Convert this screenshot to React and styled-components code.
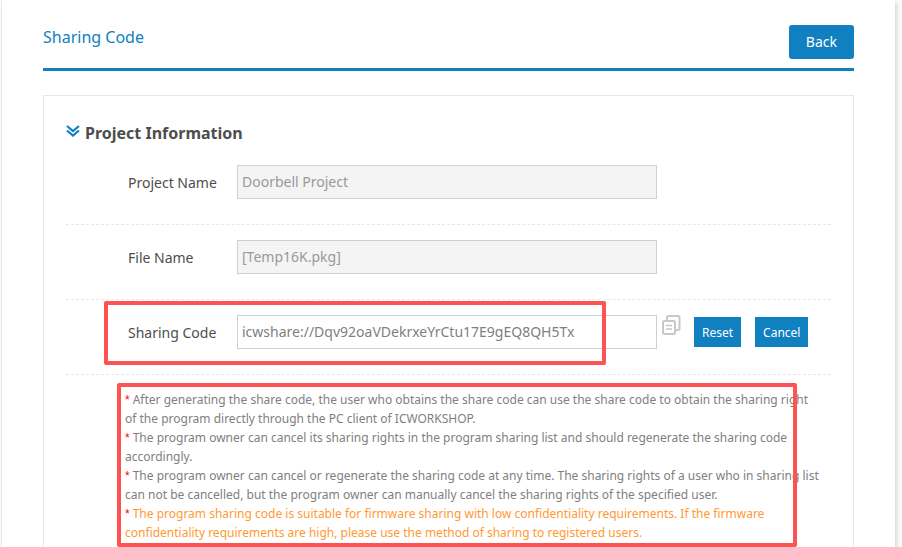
import React, { useState } from 'react'
import styled, { createGlobalStyle } from 'styled-components';

const notes = [
  {
    lines: [
      'After generating the share code, the user who obtains the share code can use the share code to obtain the sharing right',
      'of the program directly through the PC client of ICWORKSHOP.',
    ],
  },
  {
    lines: [
      'The program owner can cancel its sharing rights in the program sharing list and should regenerate the sharing code',
      'accordingly.',
    ],
  },
  {
    lines: [
      'The program owner can cancel or regenerate the sharing code at any time. The sharing rights of a user who in sharing list',
      'can not be cancelled, but the program owner can manually cancel the sharing rights of the specified user.',
    ],
  },
  {
    warning: true,
    lines: [
      'The program sharing code is suitable for firmware sharing with low confidentiality requirements. If the firmware',
      'confidentiality requirements are high, please use the method of sharing to registered users.',
    ],
  },
];

function App() {
  const [code, setCode] = useState('icwshare://Dqv92oaVDekrxeYrCtu17E9gEQ8QH5Tx');

  return (
    <>
      <GlobalStyle />
      <Page>
        <Header>
          <h1>Sharing Code</h1>
          <BackButton type="button">Back</BackButton>
        </Header>

        <Card>
          <SectionTitle>
            <ChevronsIcon />
            <h2>Project Information</h2>
          </SectionTitle>

          <Row>
            <Label htmlFor="projectName">Project Name</Label>
            <Field id="projectName" value="Doorbell Project" disabled />
          </Row>

          <Row>
            <Label htmlFor="fileName">File Name</Label>
            <Field id="fileName" value="[Temp16K.pkg]" disabled />
          </Row>

          <Row>
            <Label htmlFor="sharingCode">Sharing Code</Label>
            <Field
              id="sharingCode"
              value={code}
              onChange={(e) => setCode(e.target.value)}
            />
            <CopyButton type="button" aria-label="Copy">
              <CopyIcon />
            </CopyButton>
            <Actions>
              <ActionButton type="button">Reset</ActionButton>
              <ActionButton type="button">Cancel</ActionButton>
            </Actions>
            <CodeHighlight />
          </Row>

          <Notes>
            {notes.map(({ lines, warning }) => (
              <Note key={lines[0]} $warning={warning}>
                <span>*</span>
                {lines[0]}
                <br />
                {lines[1]}
              </Note>
            ))}
            <NotesHighlight />
          </Notes>
        </Card>
      </Page>
    </>
  )
}

export default App

function ChevronsIcon() {
  return (
    <svg width="14" height="13" viewBox="0 0 14 13" fill="none" stroke="#1080c1" strokeWidth="2.2">
      <path d="M1 1 L7 6 L13 1" />
      <path d="M1 5.5 L7 10.5 L13 5.5" />
    </svg>
  )
}

function CopyIcon() {
  return (
    <svg width="19" height="21" viewBox="0 0 19 21" fill="none" stroke="#c8c8c8" strokeWidth="2">
      <path d="M5 5 V2.5 Q5 1 6.5 1 H16 Q17.5 1 17.5 2.5 V13.5 Q17.5 15 16 15 H14" />
      <rect x="1" y="6" width="12" height="13" rx="1.5" />
      <path d="M4 10.5 H10 M4 14 H10" strokeWidth="1.5" />
    </svg>
  )
}

const GlobalStyle = createGlobalStyle`
    * {
        box-sizing: border-box;
    }
    body {
        margin: 0;
        background-color: #fdfdfd;
        font-family: "Noto Sans", "Open Sans", sans-serif;
        color: #4d4d4d;
    }
    button, input {
        font-family: inherit;
    }
    h1, h2, p {
        margin: 0;
    }
`;

const Page = styled.main`
    display: flex;
    flex-direction: column;
    min-height: 100vh;
    margin: 0 7px 0 1px;
    padding: 25px 41px 0;
    border-left: 1px solid #ebebeb;
    background-color: white;
    box-shadow: 2px 2px 4px rgba(0, 0, 0, 0.15);
`;

const Header = styled.header`
    display: flex;
    justify-content: space-between;
    align-items: flex-start;
    height: 46px;
    margin-bottom: 24px;
    border-bottom: 3px solid #1080c1;

    h1 {
        color: #1080c1;
        font-size: 16px;
        font-weight: 400;
        line-height: 24px;
    }
`;

const BackButton = styled.button`
    height: 34px;
    padding: 0 17px 2px;
    border: none;
    border-radius: 3px;
    background-color: #1080c1;
    color: white;
    font-size: 14px;
`;

const Card = styled.section`
    flex: 1;
    padding: 20px 22px 0;
    border: 1px solid #e8e8e8;
    border-bottom: none;
`;

const SectionTitle = styled.div`
    display: flex;
    align-items: center;
    gap: 5px;
    height: 34px;

    svg {
        margin-bottom: 4px;
    }
    h2 {
        font-size: 16px;
        font-weight: 700;
        line-height: 32px;
    }
`;

const Row = styled.div`
    position: relative;
    display: flex;
    align-items: flex-start;
    height: 75px;
    padding: 15px 0 0 62px;
    border-bottom: 1px dashed #e8e8e8;
`;

const Label = styled.label`
    width: 109px;
    font-size: 14px;
    line-height: 36px;
`;

const Field = styled.input`
    width: 420px;
    height: 34px;
    padding: 0 4px 2px;
    border: 1px solid #d0d0d0;
    background-color: white;
    color: #808080;
    font-size: 14px;

    &:disabled {
        background-color: #f4f4f4;
        color: #999;
    }
`;

const CopyButton = styled.button`
    display: flex;
    margin-left: 5px;
    padding: 0;
    border: none;
    background: none;
`;

const Actions = styled.div`
    display: flex;
    gap: 14px;
    margin: 2px 0 0 13px;
`;

const ActionButton = styled.button`
    height: 30px;
    padding: 0 8px;
    border: none;
    background-color: #1080c1;
    color: white;
    font-size: 12px;
`;

const Highlight = styled.div`
    position: absolute;
    border: 4px solid #ff5353;
    border-radius: 2px;
    pointer-events: none;
`;

const CodeHighlight = styled(Highlight)`
    top: 1px;
    left: 38px;
    width: 502px;
    height: 64px;
`;

const Notes = styled.div`
    position: relative;
    padding: 15px 0 0 59px;
`;

const Note = styled.p`
    color: ${({ $warning }) => ($warning ? '#ff9933' : '#808080')};
    font-size: 12px;
    line-height: 19px;
    white-space: nowrap;

    span {
        margin-right: 3px;
        color: red;
        font-family: "Liberation Sans", sans-serif;
        line-height: 1;
    }
`;

const NotesHighlight = styled(Highlight)`
    top: 8px;
    left: 51px;
    width: 680px;
    height: 164px;
`;
